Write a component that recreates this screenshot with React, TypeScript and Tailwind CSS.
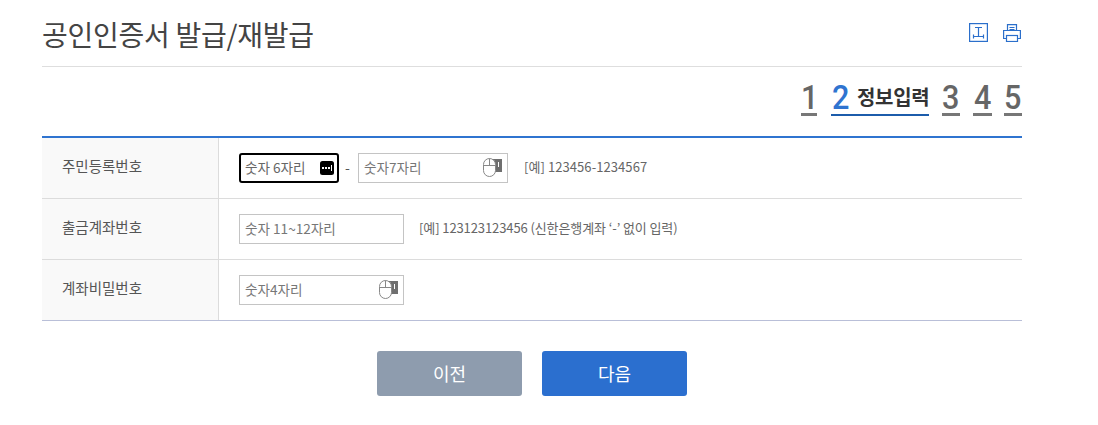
const FONT = "font-['Noto_Sans_CJK_KR','Noto_Sans',sans-serif]";

function MouseIcon() {
  return (
    <svg width="19" height="19" viewBox="0 0 19 19" fill="none" className="shrink-0">
      <rect x="7" y="1" width="12" height="13" fill="#6f6f6f" />
      <rect x="15" y="4" width="1" height="5" fill="#fff" />
      <rect x="0.5" y="0.5" width="12" height="18" rx="6" fill="#fff" stroke="#888" />
      <path d="M0.5 7.5h12M6.5 0.5v7" stroke="#888" />
    </svg>
  );
}

function KeyIcon() {
  return (
    <svg width="14" height="14" viewBox="0 0 14 14" className="shrink-0">
      <rect x="0" y="0" width="14" height="14" rx="2.5" fill="#000" />
      <path d="M2 6h2v2H2zM5 6h2v2H5zM8 6h2v2H8z" fill="#fff" />
      <rect x="11" y="4" width="1" height="6" fill="#fff" />
    </svg>
  );
}

function Field({ width, text, icon, focused }: { width: string; text: string; icon?: React.ReactNode; focused?: boolean }) {
  return (
    <div
      className={`flex items-center justify-between h-[30px] bg-white text-[13.6px] ${width} ${
        focused ? "border-2 border-black rounded-[3px] pl-[4px] pr-[3px] text-[#666]" : "border border-[#c4c4c4] pl-[5px] pr-[5px] text-[#777]"
      }`}
    >
      <span>{text}</span>
      {icon}
    </div>
  );
}

function Row({ label, last, children }: { label: string; last?: boolean; children: React.ReactNode }) {
  return (
    <div className={`flex h-[61px] border-b ${last ? "border-[#b9bfd8]" : "border-[#dcdcdc]"}`}>
      <div className="flex items-center w-[177px] pl-[20px] pb-[4px] bg-[#f9f9f9] border-r border-[#dcdcdc] text-[14.5px] text-[#555]">
        {label}
      </div>
      <div className="flex items-center pl-[20px] pb-[1px]">{children}</div>
    </div>
  );
}

function Step({ n, width }: { n: string; width: string }) {
  return (
    <span className={`flex justify-center h-[36px] text-[#666] border-b-[3px] border-[#777] ${width}`}>
      <span className="font-['Roboto'] font-medium text-[34px] leading-[34px] scale-x-90">{n}</span>
    </span>
  );
}

export default function App() {
  return (
    <div className={`${FONT} w-[1098px] h-[425px] bg-white overflow-hidden`}>
      <div className="w-[980px] ml-[42px]">
        <div className="flex items-center justify-between h-[67px] pt-[5px] border-b border-[#dedede]">
          <h1 className="text-[28px] leading-[40px] text-[#444] tracking-[-0.25px] pb-[3px]">공인인증서 발급/재발급</h1>
          <div className="flex items-center gap-[15px] pb-[6px] pr-px">
            <svg width="19" height="19" viewBox="0 0 19 19" fill="none" stroke="#2b6fcb" strokeWidth="1.2">
              <rect x="0.6" y="0.6" width="17.8" height="17.8" />
              <path d="M6 4.5h7M9.5 4.5v9M4 13.5h11M4.5 11.5v4M14.5 11.5v4" />
            </svg>
            <svg width="18" height="18" viewBox="0 0 18 18" fill="none" stroke="#2b6fcb" strokeWidth="1.2">
              <path d="M4.5 6.5V0.6h9v5.9" />
              <path d="M6.5 3.5h5M6.5 5.5h5" />
              <path d="M3.5 14.5H0.6V6.5h16.8v8h-2.9" />
              <rect x="3.5" y="11.5" width="11" height="6" />
            </svg>
          </div>
        </div>
        <div className="flex justify-end items-start h-[69px] pt-[13px]">
          <Step n="1" width="w-[16px] pl-[2px]" />
          <div className="flex items-start gap-[8px] h-[36px] border-b-[2px] border-[#1c5cab] ml-[14px] w-[98px]">
            <span className="font-['Roboto'] font-medium text-[34px] leading-[34px] text-[#2f74d0] scale-x-90 w-[18px] text-center">2</span>
            <span className="text-[20px] leading-[34px] font-bold text-[#333] tracking-[-0.3px] whitespace-nowrap">정보입력</span>
          </div>
          <Step n="3" width="w-[18px] ml-[13px]" />
          <Step n="4" width="w-[19px] ml-[13px]" />
          <Step n="5" width="w-[18px] ml-[12px]" />
        </div>
        <div className="border-t-2 border-[#2f74d0]">
          <Row label="주민등록번호">
            <Field width="w-[100px]" text="숫자 6자리" icon={<KeyIcon />} focused />
            <span className="w-[19px] pr-[2px] text-center text-[14px] text-[#555]">-</span>
            <Field width="w-[150px]" text="숫자7자리" icon={<MouseIcon />} />
            <span className="ml-[16px] mb-[2px] text-[13px] tracking-[0.07px] text-[#666]">[예] 123456-1234567</span>
          </Row>
          <Row label="출금계좌번호">
            <Field width="w-[165px]" text="숫자 11~12자리" />
            <span className="ml-[15px] mb-[2px] text-[13px] tracking-[-0.1px] text-[#666]">[예] 123123123456 (신한은행계좌 ‘-’ 없이 입력)</span>
          </Row>
          <Row label="계좌비밀번호" last>
            <Field width="w-[165px]" text="숫자4자리" icon={<MouseIcon />} />
          </Row>
        </div>
        <div className="flex justify-center gap-[20px] mt-[30px]">
          <button className="w-[145px] h-[45px] rounded-[3px] bg-[#8e9cae] text-white text-[18px]">이전</button>
          <button className="w-[145px] h-[45px] rounded-[3px] bg-[#2b6fcf] text-white text-[18px]">다음</button>
        </div>
      </div>
    </div>
  );
}
